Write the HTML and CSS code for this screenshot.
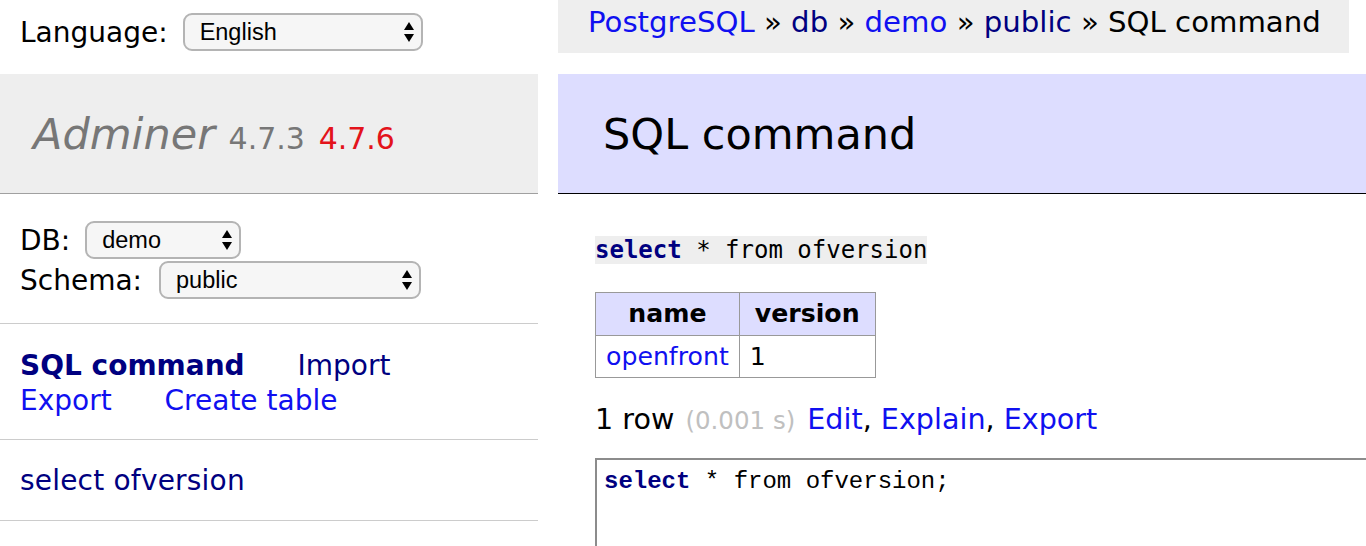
FILE: index.html
```html
<!DOCTYPE html>
<html lang="en">
<head>
<meta charset="utf-8">
<title>SQL command - Adminer</title>
<link rel="stylesheet" href="styles.css">
</head>
<body>
<div class="page">
  <aside class="side">
    <form class="lang">
      <span>Language:</span>
      <span class="sel sel-lang">
        <select><option>English</option></select>
        <svg class="arr" width="10" height="20" viewBox="0 0 10 20"><path d="M5 0 L10 8 L0 8 Z M0 12 L10 12 L5 20 Z" fill="#000"/></svg>
      </span>
    </form>
    <div class="menu">
      <h1><a class="brand" href="#">Adminer</a> <span class="version">4.7.3</span> <a class="version new" href="#">4.7.6</a></h1>
      <form class="sec dbs">
        <div class="row">
          <span>DB:</span>
          <span class="sel sel-db">
            <select><option>demo</option></select>
            <svg class="arr" width="10" height="20" viewBox="0 0 10 20"><path d="M5 0 L10 8 L0 8 Z M0 12 L10 12 L5 20 Z" fill="#000"/></svg>
          </span>
        </div>
        <div class="row">
          <span>Schema:</span>
          <span class="sel sel-schema">
            <select><option>public</option></select>
            <svg class="arr" width="10" height="20" viewBox="0 0 10 20"><path d="M5 0 L10 8 L0 8 Z M0 12 L10 12 L5 20 Z" fill="#000"/></svg>
          </span>
        </div>
      </form>
      <p class="sec links">
        <a class="v active" href="#">SQL command</a> <a class="v" href="#">Import</a>
        <a href="#">Export</a> <a href="#">Create table</a>
      </p>
      <ul class="sec tables">
        <li><a class="v" href="#">select</a> <a class="v" href="#">ofversion</a></li>
      </ul>
    </div>
  </aside>
  <main class="main">
    <div class="crumb"><a href="#">PostgreSQL</a> » <a class="v" href="#">db</a> » <a href="#">demo</a> » <a class="v" href="#">public</a> » SQL command</div>
    <h2>SQL command</h2>
    <pre class="q"><code><b class="kw">select</b> * from ofversion</code></pre>
    <table class="res">
      <thead><tr><th>name</th><th>version</th></tr></thead>
      <tbody><tr><td><a href="#">openfront</a></td><td>1</td></tr></tbody>
    </table>
    <p class="rows">1 row <span class="time">(0.001 s)</span> <a href="#">Edit</a>, <a href="#">Explain</a>, <a href="#">Export</a></p>
    <pre class="editor"><b class="kw">select</b> * from ofversion;</pre>
  </main>
</div>
</body>
</html>
```
FILE: styles.css
```css
* { box-sizing: border-box; }
html, body { margin: 0; padding: 0; background: #fff; }
body {
  font-family: "DejaVu Sans", Verdana, sans-serif;
  font-size: 28px;
  line-height: 35px;
  color: #000;
  width: 1366px;
  height: 546px;
  overflow: hidden;
}
a { color: #1010f0; text-decoration: none; }
a.v { color: #000080; }
a.active { font-weight: bold; }

.page {
  display: grid;
  grid-template-columns: 538px 808px;
  column-gap: 20px;
  align-items: start;
}

/* selects */
.sel { position: relative; display: inline-block; }
.sel select {
  appearance: none;
  -webkit-appearance: none;
  display: block;
  height: 38px;
  border: 2px solid #b4b4b4;
  border-radius: 9px;
  background: #f6f6f6;
  font-family: "Liberation Sans", Arial, sans-serif;
  font-size: 23.5px;
  color: #000;
  padding: 0 30px 0 15px;
  margin: 0;
}
.sel .arr {
  position: absolute;
  right: 9px;
  top: 9px;
  pointer-events: none;
}
.sel-lang select { width: 240px; }
.sel-db select { width: 156px; }
.sel-schema select { width: 262px; }

/* left */
.lang {
  display: flex;
  align-items: center;
  gap: 15px;
  height: 53px;
  padding: 13px 0 2px 20px;
  margin: 0;
}
.menu { margin-top: 21px; }
h1 {
  margin: 0;
  height: 120px;
  padding: 34px 0 0 33px;
  font-size: 43px;
  line-height: 53.75px;
  font-weight: normal;
  background: #eee;
  border-bottom: 1px solid #a0a0a0;
  white-space: nowrap;
}
.brand { color: #777; font-style: italic; }
.version { color: #777; font-size: 30px; }
a.version.new { color: #e3131b; }

.sec {
  margin: 0;
  border-bottom: 1px solid #ccc;
  padding-left: 20px;
  padding-right: 20px;
}
.dbs { padding-top: 26px; padding-bottom: 23px; }
.dbs .row { display: flex; align-items: center; gap: 15px; height: 40px; }
.dbs .row:last-child { gap: 17px; }
.links { padding-top: 24px; padding-bottom: 21px; }
.links a { margin-right: 44px; white-space: nowrap; }
.tables { list-style: none; padding-top: 23px; padding-bottom: 22px; }
.tables li { letter-spacing: 0.2px; }

/* right */
.main { min-width: 0; }
.crumb {
  width: fit-content;
  height: 53px;
  line-height: 44px;
  padding: 0 28px 0 30px;
  background: #eee;
  font-size: 29.2px;
  white-space: nowrap;
}
h2 {
  margin: 21px 0 0;
  height: 120px;
  padding: 34px 0 0 45px;
  font-size: 43px;
  line-height: 53.75px;
  font-weight: normal;
  background: #ddf;
  border-bottom: 1px solid #000;
}
.q {
  margin: 43px 0 0 37px;
  font-family: "Liberation Mono", "Courier New", monospace;
  font-size: 24px;
  line-height: 27px;
}
.q code { background: #eee; }
.kw { color: #000080; font-weight: bold; }

.res {
  margin: 27px 0 0 37px;
  border-collapse: collapse;
  font-size: 25.2px;
  line-height: 31.5px;
}
.res th, .res td { border: 1px solid #999; padding: 5px 10px; }
.res th { background: #ddf; text-align: center; padding: 5px 15px; font-weight: bold; }
.res td { text-align: left; }

.rows { margin: 24px 0 0 37px; white-space: nowrap; font-size: 28.6px; }
.time { color: #c0c0c0; font-size: 24.5px; margin: 0 3px 0 2px; }

.editor {
  margin: 20px 0 0 37px;
  width: 900px;
  height: 200px;
  border: 2px solid #8c8c8c;
  padding: 8px 7px;
  font-family: "Liberation Mono", "Courier New", monospace;
  font-size: 24px;
  line-height: 27px;
}
```
